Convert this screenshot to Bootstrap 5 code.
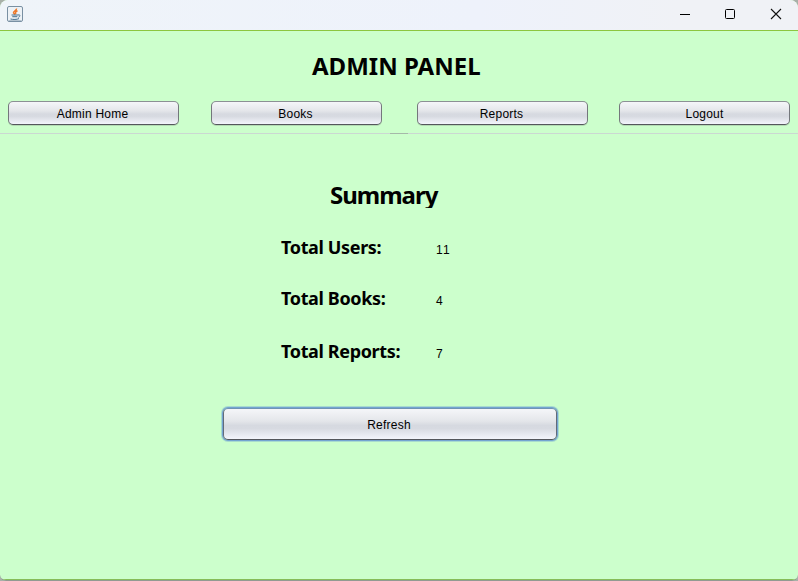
<!DOCTYPE html>
<html lang="en">
<head>
<meta charset="utf-8">
<title>Admin Panel</title>
<link href="https://cdn.jsdelivr.net/npm/bootstrap@5.3.0/dist/css/bootstrap.min.css" rel="stylesheet">
<style>
body{background:#a9b0a9;font-family:"Liberation Sans",Arial,sans-serif;font-size:12px;line-height:16px;color:#000}
.window{height:581px;background:#cfc;border-radius:8px 8px 6px 6px;border-bottom:1px solid #929a92}
.titlebar{height:31px;flex:none;background:linear-gradient(90deg,#eff4f9,#eef2fb 60%,#f0f2f6 85%);border-bottom:1px solid #8cc63f;padding:0 16px 2px 7px}
.app-icon{width:16px;height:16px;display:block}
.controls{gap:34px}
.heading{font-family:"Noto Sans","Open Sans",sans-serif;font-weight:700;font-size:24px;line-height:32px;margin:0;white-space:nowrap}
.title{padding:19px 0 0 312px;letter-spacing:0}
.nimbus{height:24px;padding:2px 0 0;font-size:12px;line-height:16px;letter-spacing:.22px;color:#000;border:1px solid;border-color:#8c9095 #74777c #54575c #74777c;border-radius:5px;background:linear-gradient(#f5f6f9,#e4e6ea 40%,#d6d9e0 55%,#d7dae1 65%,#f3f5fc);box-shadow:0 1px 0 rgba(150,175,150,.45)}
.nimbus:hover{color:#000}
.tabs{display:grid;grid-template-columns:171px 171px 171px 171px;column-gap:32px;padding:19px 8px 0}
.tabs .nimbus:nth-child(n+3){margin-left:3px;margin-right:-3px}
.tabs .nimbus:nth-child(4){margin-left:2px;margin-right:-2px}
.tabs .nimbus:nth-child(-n+3){padding-right:2px}
.divider{height:1px;margin-top:8px;background:linear-gradient(90deg,transparent 390px,#a5b8a9 390px,#a5b8a9 408px,transparent 408px),#cbd8d2}
.summary{padding:45px 0 0 330px}
.summary-box{height:29px;overflow:hidden}
.summary .heading{letter-spacing:-1px}
.stats{display:grid;grid-template-columns:155px 1fr;grid-template-rows:51px 53px 52px;padding:27px 0 0 281px}
.stat-name{font-family:"Noto Sans","Open Sans",sans-serif;font-weight:700;font-size:18px;line-height:24px;letter-spacing:-.36px;white-space:nowrap}
.stat-value{padding-top:7px;letter-spacing:.4px;font-kerning:none}
.refresh{width:334px;height:32px;margin:17px 0 0 223px;padding-right:2px;box-shadow:0 0 0 1px #73a4d1,0 0 0 2px rgba(115,164,209,.4);border-color:#7194b5 #626c78 #54575c #626c78}
.bottom-edge{height:1px;background:#86bd58}
</style>
<script src="https://cdn.jsdelivr.net/npm/bootstrap@5.3.0/dist/js/bootstrap.bundle.min.js"></script>
</head>
<body class="overflow-hidden">
<div class="window d-flex flex-column overflow-hidden">
  <header class="titlebar d-flex align-items-center justify-content-between">
    <svg class="app-icon" viewBox="0 0 16 16" fill="none">
      <rect x=".5" y=".5" width="15" height="15" rx="1.5" fill="#edf2f6" stroke="#7990a3"/>
      <path d="M1.500 14.500h13" stroke="#b3c2ce"/>
      <path d="M9.500 2.500C10 4.500 6 5 6.500 6.800L8 8.500M10.500 4.800C8.500 5.600 8 6.500 9 8" stroke="#ee792b" stroke-width="1.500"/>
      <path d="M4.500 9h6.500M5.300 10.700h5M11 9c2.500-.7 2.600 1.500.4 2.300M3.500 13c2.500.7 6.500.6 8.500-.4" stroke="#456e8d"/>
    </svg>
    <div class="controls d-flex align-items-center">
      <svg width="12" height="12" viewBox="0 0 12 12"><path d="M2 6.500h10" stroke="#000"/></svg>
      <svg width="12" height="12" viewBox="0 0 12 12"><rect x="1.500" y="1.500" width="9" height="9" rx="1" fill="none" stroke="#000"/></svg>
      <svg width="12" height="12" viewBox="0 0 12 12"><path d="M1 1l10 10M11 1L1 11" stroke="#111" stroke-width="1.100"/></svg>
    </div>
  </header>
  <h1 class="heading title">ADMIN PANEL</h1>
  <nav class="tabs">
    <button class="btn nimbus">Admin Home</button>
    <button class="btn nimbus">Books</button>
    <button class="btn nimbus">Reports</button>
    <button class="btn nimbus">Logout</button>
  </nav>
  <div class="divider"></div>
  <main class="flex-grow-1">
    <div class="summary"><div class="summary-box"><h2 class="heading">Summary</h2></div></div>
    <div class="stats">
      <div class="stat-name">Total Users:</div><div class="stat-value">11</div>
      <div class="stat-name">Total Books:</div><div class="stat-value">4</div>
      <div class="stat-name">Total Reports:</div><div class="stat-value">7</div>
    </div>
    <button class="btn nimbus refresh">Refresh</button>
  </main>
  <div class="bottom-edge"></div>
</div>
</body>
</html>
